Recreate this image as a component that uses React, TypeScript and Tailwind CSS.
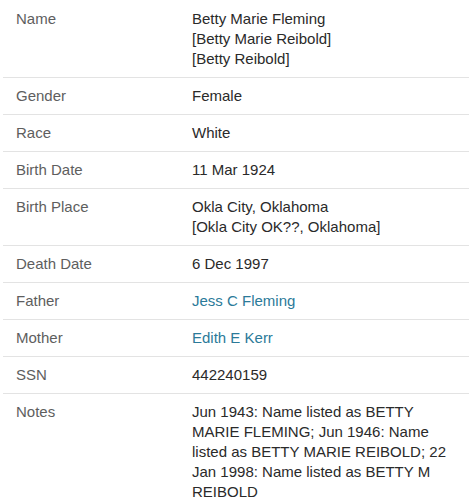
import React from "react";

type Row = { label: string; lines: string[]; link?: boolean };

const rows: Row[] = [
  { label: "Name", lines: ["Betty Marie Fleming", "[Betty Marie Reibold]", "[Betty Reibold]"] },
  { label: "Gender", lines: ["Female"] },
  { label: "Race", lines: ["White"] },
  { label: "Birth Date", lines: ["11 Mar 1924"] },
  { label: "Birth Place", lines: ["Okla City, Oklahoma", "[Okla City OK??, Oklahoma]"] },
  { label: "Death Date", lines: ["6 Dec 1997"] },
  { label: "Father", lines: ["Jess C Fleming"], link: true },
  { label: "Mother", lines: ["Edith E Kerr"], link: true },
  { label: "SSN", lines: ["442240159"] },
  {
    label: "Notes",
    lines: [
      "Jun 1943: Name listed as BETTY MARIE FLEMING; Jun 1946: Name listed as BETTY MARIE REIBOLD; 22 Jan 1998: Name listed as BETTY M REIBOLD",
    ],
  },
];

export default function App() {
  return (
    <div className="bg-white w-[476px] h-[501px] overflow-hidden pt-px font-['Liberation_Sans',Arial,sans-serif] text-[15px] leading-5">
      <div className="mx-[3px] w-[466px]">
        {rows.map((r, i) => (
          <div
            key={r.label}
            className={`flex py-2 ${i < rows.length - 1 ? "border-b border-[#e3e3e3]" : ""}`}
          >
            <div className="w-[189px] shrink-0 pl-[13px] text-[#5e5e5e]">{r.label}</div>
            <div className="flex-1 pr-[14px] text-[#2a2a2a]">
              {r.lines.map((l) =>
                r.link ? (
                  <a key={l} href="#" className="block text-[#2b7a99]">
                    {l}
                  </a>
                ) : (
                  <div key={l}>{l}</div>
                )
              )}
            </div>
          </div>
        ))}
      </div>
    </div>
  );
}
